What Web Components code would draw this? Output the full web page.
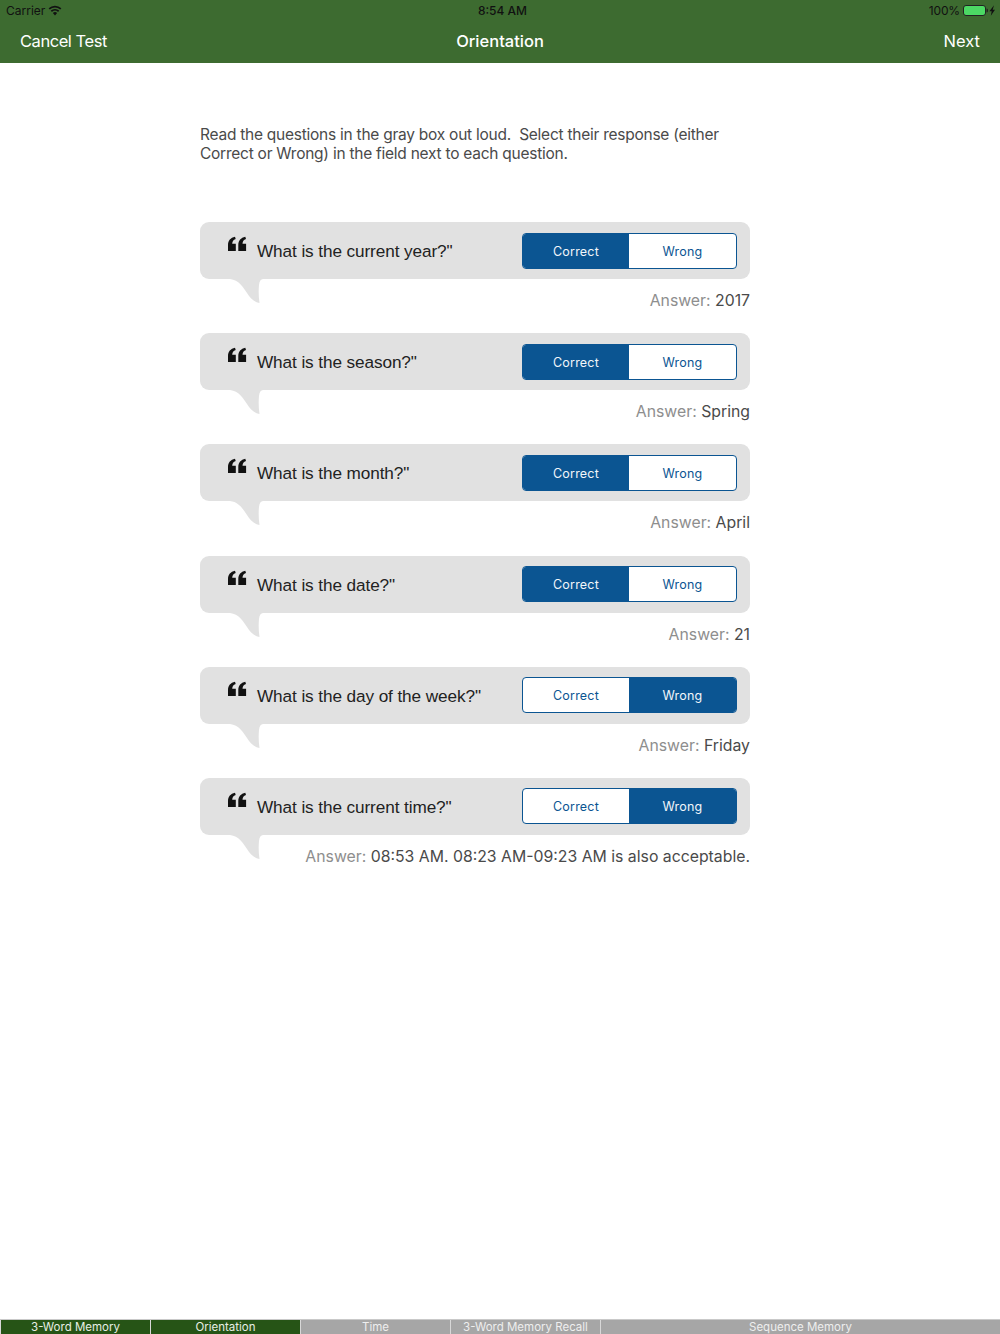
<!DOCTYPE html>
<html><head><meta charset="utf-8"><style>
html,body{margin:0;padding:0;background:#fff}
body{width:1000px;height:1334px;display:flex;flex-direction:column;font-family:Inter,"Liberation Sans",sans-serif;overflow:hidden}
</style></head><body>
<app-header></app-header>
<test-page>
<span slot="intro">Read the questions in the gray box out loud.&nbsp; Select their response (either Correct or Wrong) in the field next to each question.</span>
<question-row q="What is the current year?&quot;" a="2017" sel="correct"></question-row>
<question-row q="What is the season?&quot;" a="Spring" sel="correct"></question-row>
<question-row q="What is the month?&quot;" a="April" sel="correct"></question-row>
<question-row q="What is the date?&quot;" a="21" sel="correct"></question-row>
<question-row q="What is the day of the week?&quot;" a="Friday" sel="wrong"></question-row>
<question-row q="What is the current time?&quot;" a="08:53 AM. 08:23 AM-09:23 AM is also acceptable." sel="wrong"></question-row>
</test-page>
<tab-bar></tab-bar>
<script>
function def(name,html){customElements.define(name,class extends HTMLElement{connectedCallback(){if(this.shadowRoot)return;const r=this.attachShadow({mode:'open'});r.innerHTML=typeof html==='function'?html(this):html;}})}
def('app-header',`<style>
:host{display:block;background:#3d6b30;height:63px;flex:none}
.st{height:20px;display:grid;grid-template-columns:1fr auto 1fr;align-items:center;padding:1px 5px 0 6px;box-sizing:border-box;font-size:12px;color:#111;line-height:19px}
.l,.r{display:flex;align-items:center}
.l{gap:3px}.r{justify-content:flex-end;gap:3px}
.r span{letter-spacing:-.15px}
.t{font-weight:500;position:relative;left:2px}
.nav{height:43px;display:grid;grid-template-columns:1fr auto 1fr;align-items:center;padding:0 20px;color:#fff;font-size:16.5px;margin-top:-1px}
.nav b{font-weight:500}.nav span:first-child{letter-spacing:-.45px}.nav span:last-child{text-align:right}
svg{display:block}
</style>
<div class="st"><div class="l"><span>Carrier</span><svg width="14" height="11" viewBox="0 0 14 11"><path d="M7 10.400 4.900 8a3 3 0 0 1 4.200 0zM3.900 6.900 2.800 5.600a6.200 6.200 0 0 1 8.400 0l-1.100 1.300a4.600 4.600 0 0 0-6.200 0zM1.800 4.500.6 3.200a9.400 9.400 0 0 1 12.800 0l-1.200 1.300a7.800 7.800 0 0 0-10.400 0z" fill="#111"/></svg></div>
<div class="t">8:54 AM</div>
<div class="r"><span>100%</span><svg width="32" height="11" viewBox="0 0 32 11"><rect x=".5" y=".5" width="22" height="10" rx="2.500" fill="#4cd964" stroke="#222"/><path d="M23.500 3.500c1 0 1.500.8 1.500 2s-.5 2-1.500 2z" fill="#222"/><path d="M31 .2 26.400 6.200h2.300L27.800 10.800 32 4.700h-2.300z" fill="#111"/></svg></div></div>
<div class="nav"><span>Cancel Test</span><b>Orientation</b><span>Next</span></div>`);
def('test-page',`<style>
:host{display:block;flex:1;padding:62px 250px 0 200px;min-height:0}
.intro{font-size:15.5px;letter-spacing:-.25px;line-height:19px;color:#4a4a4a;height:97px}
</style><div class="intro"><slot name="intro"></slot></div><slot></slot>`);
def('question-row',h=>{const w=h.getAttribute('sel')==='wrong';return `<style>
:host{display:block;height:111.2px;position:relative}
.b{height:57px;background:#e1e1e1;border-radius:9px;display:flex;align-items:center;padding:0 13px 0 27px;box-sizing:border-box}
.qm{flex:none;margin:-13px 10px 0 0;display:block}
.q{flex:1;font:17.2px/22px "Liberation Sans",sans-serif;color:#222;letter-spacing:-.1px;padding-top:1px}
.seg{flex:none;display:grid;grid-template-columns:106px 107px;height:36px;box-sizing:border-box;border:1px solid #0b5592;border-radius:4px;overflow:hidden;background:#fff;font-size:12.5px;color:#0b5592}
.seg span{display:flex;align-items:center;justify-content:center;letter-spacing:.2px;padding-top:1px}
.seg .on{background:#0b5592;color:#f2f6fa}
.tail{position:absolute;left:30px;top:57px;display:block}
.a{margin-top:12px;text-align:right;font-size:15.8px;line-height:20px;color:#8e8e8e}
.a span{color:#4a4a4a}
</style><div class="b"><svg class="qm" width="20" height="16" viewBox="0 0 20 16"><path d="M1 15V9C1 4.800 3.500 1.700 8 .8l.7 2.100C6.300 3.600 5.300 5.200 5.200 7.800H8.800V15zM11.300 15V9C11.300 4.800 13.800 1.700 18.300 .8l.7 2.100C16.600 3.600 15.600 5.200 15.500 7.800H19.100V15z" fill="#111"/></svg><div class="q">${h.getAttribute('q').replace(/"/g,'&quot;')}</div><div class="seg"><span class="${w?'':'on'}">Correct</span><span class="${w?'on':''}">Wrong</span></div></div>
<svg class="tail" width="33" height="25" viewBox="0 0 33 25"><path d="M0 0C9 1 13 8 17 14 20 19 24 23 29.500 24 28.500 17 28.500 11 29 6 29.300 2 31 0 33 0z" fill="#e1e1e1"/></svg>
<div class="a">Answer: <span>${h.getAttribute('a')}</span></div>`});
def('tab-bar',`<style>
:host{display:grid;grid-template-columns:150px 150px 150px 150px 400px;height:15px;flex:none;box-sizing:border-box;border-top:1px solid #c9c9c9;font-size:11.5px;line-height:15px;color:#eee;overflow:hidden;text-align:center}
div{background:#a6a6a6;border-left:1px solid #d8d8d8;box-sizing:border-box;white-space:nowrap;height:14px}
div:first-child{border:0}.g{background:#265416;color:#e8efe5}
</style><div class="g">3-Word Memory</div><div class="g">Orientation</div><div>Time</div><div>3-Word Memory Recall</div><div>Sequence Memory</div>`);
</script>
</body></html>
